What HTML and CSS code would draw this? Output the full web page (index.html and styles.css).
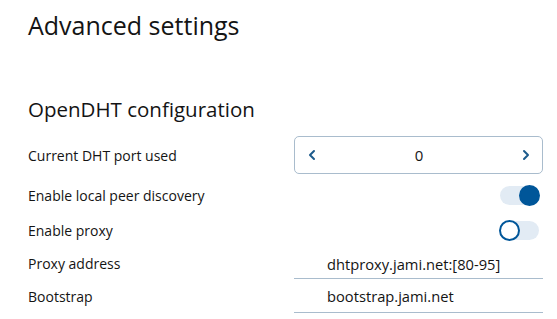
FILE: index.html
```html
<!DOCTYPE html>
<html>
<head>
  <meta name="viewport" content="width=device-width, initial-scale=1">
  <link rel="stylesheet" href="styles.css">
</head>
<body>
<div class=page>
  <h1 class=title>Advanced settings</h1>
  <h2 class=section>OpenDHT configuration</h2>
  <div class="row row_spin">
    <span class=label>Current DHT port used</span>
    <div class=spin>
      <svg class=chev width=10 height=12 viewBox="0 0 10 12"><path d="M7 2 L3 6 L7 10" fill=none stroke="#1d5b8c" stroke-width=2 stroke-linecap=round stroke-linejoin=round /></svg>
      <span class=spin_value>0</span>
      <svg class=chev width=10 height=12 viewBox="0 0 10 12"><path d="M3 2 L7 6 L3 10" fill=none stroke="#1d5b8c" stroke-width=2 stroke-linecap=round stroke-linejoin=round /></svg>
    </div>
  </div>
  <div class="row row_toggle">
    <span class=label>Enable local peer discovery</span>
    <div class=control><div class="toggle on"><span class=knob></span></div></div>
  </div>
  <div class="row row_toggle">
    <span class=label>Enable proxy</span>
    <div class=control><div class="toggle"><span class=knob></span></div></div>
  </div>
  <div class="row row_field">
    <span class=label>Proxy address</span>
    <div class=field>dhtproxy.jami.net:[80-95]</div>
  </div>
  <div class="row row_field last">
    <span class=label>Bootstrap</span>
    <div class=field>bootstrap.jami.net</div>
  </div>
</div>
</body>
</html>
```

FILE: styles.css
```css
html, body {
  margin: 0;
  background: white;
  color: #141414;
  font-family: "Open Sans", sans-serif;
  overflow: hidden;
}
.page {
  padding: 0 14px 0 28px;
}
.title {
  margin: 0;
  padding-top: 8px;
  font-size: 25px;
  font-weight: normal;
  line-height: 34px;
}
.section {
  margin: 0;
  padding-top: 53px;
  font-size: 20.5px;
  font-weight: normal;
  line-height: 28px;
}
.row {
  display: flex;
  align-items: center;
  justify-content: space-between;
  font-size: 14px;
}
.row_spin {
  margin-top: 13px;
  height: 38px;
}
.row_toggle {
  margin-top: 5px;
  height: 33px;
}
.row_toggle + .row_toggle {
  margin-top: 2px;
}
.row_field {
  height: 32px;
}
.row_field.last {
  height: 34px;
}
.spin {
  box-sizing: border-box;
  width: 249px;
  height: 38px;
  border: 1px solid #a9bccd;
  border-radius: 5px;
  display: flex;
  align-items: center;
  justify-content: space-between;
  padding: 0 11px 0 12px;
}
.spin_value {
  font-size: 15px;
}
.control {
  width: 249px;
  display: flex;
  justify-content: flex-end;
  padding-right: 4px;
  box-sizing: border-box;
}
.toggle {
  position: relative;
  width: 39px;
  height: 19px;
  border-radius: 10px;
  background: #e2ebf4;
}
.knob {
  position: absolute;
  top: -1px;
  left: -1px;
  width: 17px;
  height: 17px;
  border: 2px solid #005699;
  border-radius: 50%;
  background: white;
}
.toggle.on .knob {
  left: auto;
  right: -1px;
  background: #005699;
}
.field {
  box-sizing: border-box;
  width: 249px;
  height: 100%;
  border-bottom: 1px solid #a9bccd;
  padding: 7px 0 0 33px;
  font-size: 14.7px;
}
```
